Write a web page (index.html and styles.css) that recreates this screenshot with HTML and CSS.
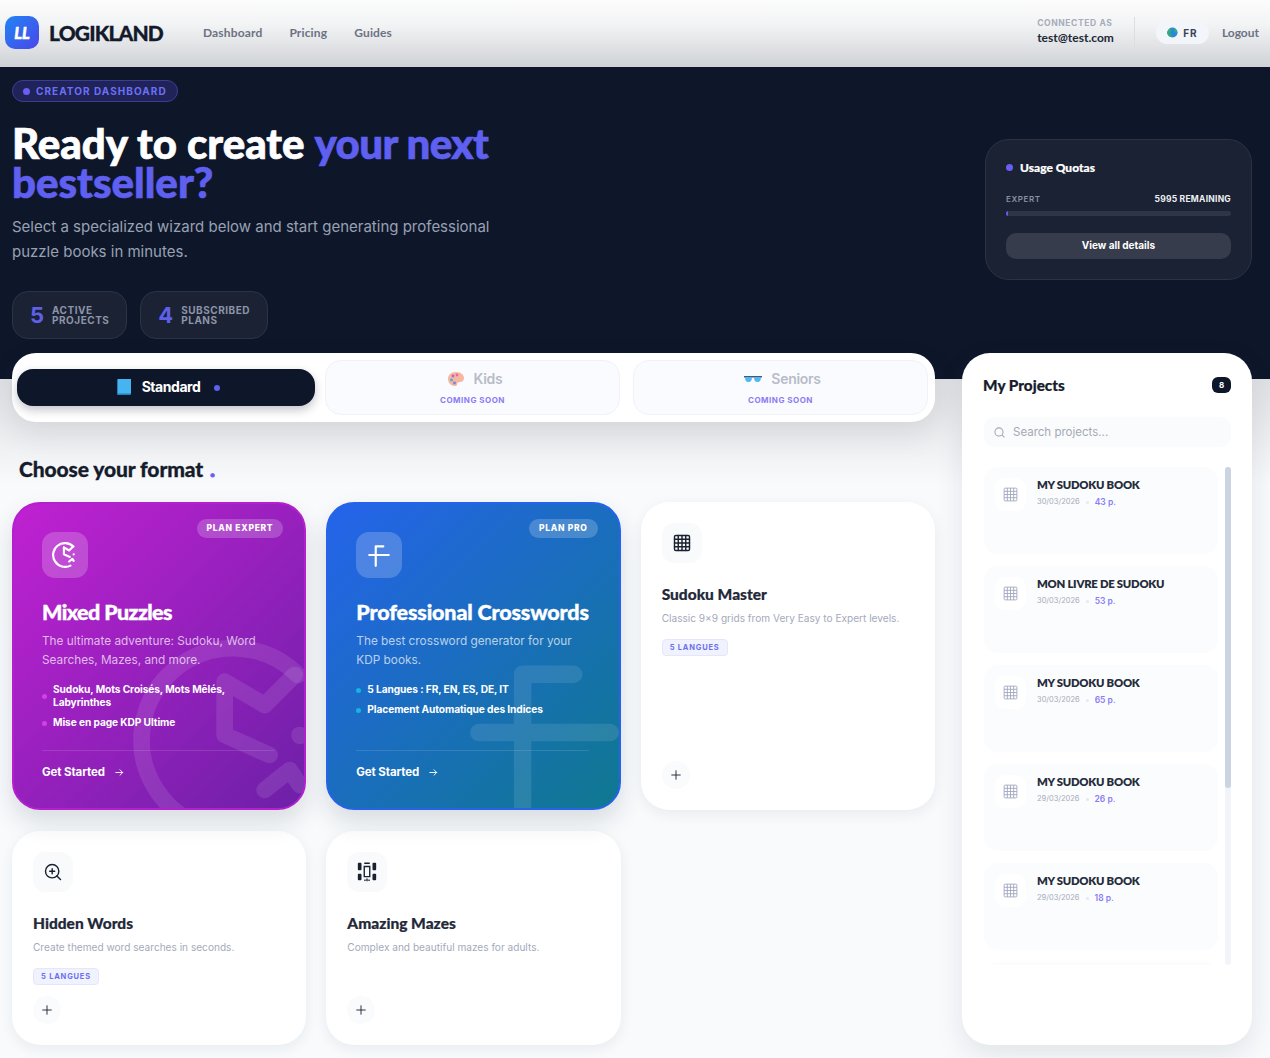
FILE: index.html
```html
<!DOCTYPE html>
<html lang="en">
<head>
    <meta charset="UTF-8">
    <meta name="viewport" content="width=device-width, initial-scale=1.0">
    <title>Logikland - Creator Dashboard</title>
    <link rel="stylesheet" href="styles.css">
</head>
<body>

<!-- Shared icons -->
<svg class="icon-defs" width="0" height="0">
    <symbol id="i-grid" viewBox="0 0 24 24"><rect x="3" y="3" width="18" height="18" rx="1.5"/><path d="M3 7.500h18M3 12h18M3 16.500h18M7.500 3v18M12 3v18M16.500 3v18"/></symbol>
    <symbol id="i-plus" viewBox="0 0 24 24"><path d="M12 4v16M4 12h16"/></symbol>
    <symbol id="i-arrow" viewBox="0 0 24 24"><path d="M4 12h15M13 6l6 6-6 6"/></symbol>
    <symbol id="i-clock" viewBox="0 0 24 24"><path d="M19.800 4.200A11 11 0 1 0 17 21.800"/><path d="M11 5L15.800 7.800 19.400 4.200M11 5v6.400l5.400 2.400M20 11.400v.1M15.800 18l3-2.400 1.200 1.800"/></symbol>
    <symbol id="i-cross" viewBox="0 0 24 24"><path d="M3 12h18M9 22V4h7"/></symbol>
</svg>

<header class="topbar">
    <div class="brand">
        <div class="brand-mark">LL</div>
        <span class="brand-name">LOGIKLAND</span>
    </div>
    <nav class="nav">
        <a>Dashboard</a>
        <a>Pricing</a>
        <a>Guides</a>
    </nav>
    <div class="account">
        <div class="account-info">
            <span class="account-label">CONNECTED AS</span>
            <span class="account-email">test@test.com</span>
        </div>
        <div class="account-sep"></div>
        <div class="lang">
            <svg class="globe" viewBox="0 0 12 12"><circle cx="6" cy="6" r="5.500" fill="#2f86d8"/><path d="M2 2.500c2-1 3-.5 3 1s-2 1.500-1.500 3 2 1.500 1.500 4.500c-2.500 0-4.500-2-5-4.500 0-1.500 1-3 2-4zM7 1c2 .5 4 2.500 4.500 5-1.500.5-3 0-3.500-1.500S8 2.500 7 1z" fill="#2fae7d"/></svg>
            <span>FR</span>
        </div>
        <a class="logout">Logout</a>
    </div>
</header>

<section class="hero">
    <div class="hero-main">
        <div class="hero-pill"><span class="dot"></span>CREATOR DASHBOARD</div>
        <h1>Ready to create <span class="accent tight">your next</span><br><span class="accent">bestseller?</span></h1>
        <p class="hero-text">Select a specialized wizard below and start generating professional puzzle books in minutes.</p>
        <div class="stats">
            <div class="stat"><span class="stat-num">5</span><span class="stat-label">ACTIVE<br>PROJECTS</span></div>
            <div class="stat"><span class="stat-num">4</span><span class="stat-label">SUBSCRIBED<br>PLANS</span></div>
        </div>
    </div>
    <aside class="quota">
        <div class="quota-title"><span class="dot"></span>Usage Quotas</div>
        <div class="quota-row"><span>EXPERT</span><strong>5995 REMAINING</strong></div>
        <div class="quota-bar"><div class="quota-fill" style="width: 1%"></div></div>
        <button class="quota-btn">View all details</button>
    </aside>
</section>

<div class="workspace">
    <main class="content">
        <div class="tabs">
            <div class="tab tab-active">
                <svg class="tab-icon" viewBox="0 0 14 16"><rect width="14" height="16" rx="1" fill="#1f7fc4"/><rect x="1" width="13" height="14.500" fill="#45b4ef"/></svg>
                <span>Standard</span>
                <span class="tab-dot"></span>
            </div>
            <div class="tab tab-soon">
                <div class="tab-line">
                    <svg class="tab-icon" viewBox="0 0 18 16"><path d="M9 1C4 1 1 4 1 8s3 7 7 7c2 0 2-1 2-2s1-2 3-2 4-1 4-4-3-6-8-6z" fill="#f5b7a1"/><circle cx="6" cy="5" r="1.400" fill="#c65ad6"/><circle cx="4.500" cy="9" r="1.400" fill="#3fb5c9"/><circle cx="7.500" cy="12" r="1.400" fill="#7f7fe0"/><circle cx="10" cy="4" r="1.400" fill="#e96a8c"/></svg>
                    <span>Kids</span>
                </div>
                <span class="soon">COMING SOON</span>
            </div>
            <div class="tab tab-soon tab-last">
                <div class="tab-line">
                    <svg class="tab-icon" viewBox="0 0 18 8"><path d="M0 1h18v1.500h-18z" fill="#4a5578"/><path d="M1 2h7c0 3-1 5-3.500 5S1 5 1 2zM10 2h7c0 3-1 5-3.500 5S10 5 10 2z" fill="#4fb8ee"/></svg>
                    <span>Seniors</span>
                </div>
                <span class="soon">COMING SOON</span>
            </div>
        </div>

        <h2 class="section-title">Choose your format <span class="section-dot">.</span></h2>

        <div class="formats">
            <article class="format format-mixed">
                <svg class="watermark watermark-clock"><use href="#i-clock"/></svg>
                <span class="plan">PLAN EXPERT</span>
                <div class="format-icon"><svg><use href="#i-clock"/></svg></div>
                <h3>Mixed Puzzles</h3>
                <p class="format-text">The ultimate adventure: Sudoku, Word Searches, Mazes, and more.</p>
                <ul class="perks">
                    <li>Sudoku, Mots Croisés, Mots Mêlés, Labyrinthes</li>
                    <li>Mise en page KDP Ultime</li>
                </ul>
                <div class="format-cta">Get Started <svg><use href="#i-arrow"/></svg></div>
            </article>

            <article class="format format-cross">
                <svg class="watermark watermark-cross"><use href="#i-cross"/></svg>
                <span class="plan">PLAN PRO</span>
                <div class="format-icon"><svg><use href="#i-cross"/></svg></div>
                <h3>Professional Crosswords</h3>
                <p class="format-text">The best crossword generator for your KDP books.</p>
                <ul class="perks">
                    <li>5 Langues : FR, EN, ES, DE, IT</li>
                    <li>Placement Automatique des Indices</li>
                </ul>
                <div class="format-cta">Get Started <svg><use href="#i-arrow"/></svg></div>
            </article>

            <article class="tool">
                <div class="tool-icon"><svg class="icon-line"><use href="#i-grid"/></svg></div>
                <h3>Sudoku Master</h3>
                <p>Classic 9×9 grids from Very Easy to Expert levels.</p>
                <span class="tag">5 LANGUES</span>
                <div class="tool-add"><svg><use href="#i-plus"/></svg></div>
            </article>

            <article class="tool">
                <div class="tool-icon">
                    <svg class="icon-line" viewBox="0 0 24 24"><circle cx="11" cy="11" r="8"/><path d="M21 21l-4.300-4.300M11 8v6M8 11h6"/></svg>
                </div>
                <h3>Hidden Words</h3>
                <p>Create themed word searches in seconds.</p>
                <span class="tag">5 LANGUES</span>
                <div class="tool-add"><svg><use href="#i-plus"/></svg></div>
            </article>

            <article class="tool">
                <div class="tool-icon">
                    <svg class="icon-maze" viewBox="0 0 24 24"><rect x="2" y="2" width="4" height="8" rx="1"/><rect x="18" y="2" width="4" height="8" rx="1"/><rect x="2" y="14" width="4" height="7" rx="1"/><rect x="18" y="14" width="4" height="7" rx="1"/><path class="maze-line" d="M9 6h6v11H9zM9 2.500h6M9 21h1.500M13.500 21H15M12 19v3"/></svg>
                </div>
                <h3>Amazing Mazes</h3>
                <p>Complex and beautiful mazes for adults.</p>
                <div class="tool-add"><svg><use href="#i-plus"/></svg></div>
            </article>
        </div>
    </main>

    <aside class="projects">
        <div class="projects-head">
            <h2>My Projects</h2>
            <span class="count">8</span>
        </div>
        <div class="search">
            <svg viewBox="0 0 24 24"><circle cx="11" cy="11" r="7.500"/><path d="M21 21l-4.500-4.500"/></svg>
            <span>Search projects...</span>
        </div>
        <div class="projects-body">
            <div class="project-list">
                <div class="project">
                    <div class="project-icon"><svg><use href="#i-grid"/></svg></div>
                    <div class="project-info"><h4>MY SUDOKU BOOK</h4><div class="meta"><span>30/03/2026</span><i></i><b>43 p.</b></div></div>
                </div>
                <div class="project">
                    <div class="project-icon"><svg><use href="#i-grid"/></svg></div>
                    <div class="project-info"><h4>MON LIVRE DE SUDOKU</h4><div class="meta"><span>30/03/2026</span><i></i><b>53 p.</b></div></div>
                </div>
                <div class="project">
                    <div class="project-icon"><svg><use href="#i-grid"/></svg></div>
                    <div class="project-info"><h4>MY SUDOKU BOOK</h4><div class="meta"><span>30/03/2026</span><i></i><b>65 p.</b></div></div>
                </div>
                <div class="project">
                    <div class="project-icon"><svg><use href="#i-grid"/></svg></div>
                    <div class="project-info"><h4>MY SUDOKU BOOK</h4><div class="meta"><span>29/03/2026</span><i></i><b>26 p.</b></div></div>
                </div>
                <div class="project">
                    <div class="project-icon"><svg><use href="#i-grid"/></svg></div>
                    <div class="project-info"><h4>MY SUDOKU BOOK</h4><div class="meta"><span>29/03/2026</span><i></i><b>18 p.</b></div></div>
                </div>
                <div class="project project-cut"></div>
            </div>
            <div class="scrollbar"><div class="scrollbar-thumb"></div></div>
        </div>
    </aside>
</div>

</body>
</html>
```

FILE: styles.css
```css
* {
    box-sizing: border-box;
}

body {
    margin: 0;
    font-family: 'Inter', sans-serif;
    color: #1e2433;
    /* soft grey band right under the dark hero */
    background: linear-gradient(#dfe0e3 0, #dfe0e3 379px, #f8fafc 485px);
}

h1, h2, h3, h4, p, ul {
    margin: 0;
    padding: 0;
}

.icon-defs {
    position: absolute;
}

.accent {
    color: #5f5ff0;
}

.dot {
    width: 7px;
    height: 7px;
    border-radius: 50%;
    background: #6a5df5;
    flex: none;
}

/* Top bar */
.topbar {
    height: 67px;
    display: flex;
    align-items: center;
    padding: 0 11px 2px 5px;
    background: linear-gradient(#fcfcfc 0, #f3f4f5 35%, #cfd2d6 100%);
}

.brand {
    display: flex;
    align-items: center;
    gap: 10px;
}

.brand-mark {
    width: 34px;
    height: 33px;
    border-radius: 10px;
    background: linear-gradient(135deg, #2185f4, #4b46e8);
    color: #fff;
    font-family: 'Lato', sans-serif;
    font-weight: 900;
    font-style: italic;
    font-size: 16px;
    line-height: 33px;
    text-align: center;
    -webkit-text-stroke: 0.5px #fff;
}

.brand-name {
    margin-bottom: 1px;
    font-family: 'Lato', sans-serif;
    font-weight: 900;
    font-size: 21px;
    letter-spacing: -0.85px;
    color: #131a2b;
    -webkit-text-stroke: 0.3px #131a2b;
}

.nav {
    display: flex;
    gap: 27px;
    margin: 0 0 1px 40px;
    font-family: 'Lato', sans-serif;
    font-size: 12px;
    font-weight: 700;
    letter-spacing: 0.15px;
    color: #6b7285;
}

.account {
    margin-left: auto;
    display: flex;
    align-items: center;
}

.account-info {
    display: flex;
    flex-direction: column;
    gap: 2px;
    margin-bottom: 3px;
}

.account-label {
    font-size: 8.500px;
    font-weight: 700;
    letter-spacing: 0.6px;
    color: #a6acbb;
}

.account-email {
    font-family: 'Lato', sans-serif;
    font-size: 12px;
    font-weight: 700;
    color: #222836;
}

.account-sep {
    width: 1px;
    height: 32px;
    margin: 0 21px 0 20px;
    background: #dcdee2;
}

.lang {
    width: 53px;
    height: 22px;
    display: flex;
    align-items: center;
    justify-content: center;
    gap: 5px;
    border-radius: 11px;
    background: #f2f5fa;
    font-size: 10px;
    font-weight: 700;
    letter-spacing: 1px;
    color: #3b4254;
}

.globe {
    width: 11px;
    height: 11px;
}

.logout {
    margin: 0 0 1px 13px;
    font-family: 'Lato', sans-serif;
    font-size: 12px;
    font-weight: 700;
    color: #6b7285;
}

/* Hero */
.hero {
    height: 312px;
    display: flex;
    align-items: center;
    justify-content: space-between;
    padding: 13px 18px 40px 12px;
    background: #0e172a;
}

.hero-main {
    width: 490px;
    align-self: flex-start;
}

.hero-pill {
    display: flex;
    width: fit-content;
    align-items: center;
    gap: 6px;
    height: 22px;
    padding: 0 10px;
    border: 1px solid #3a3d96;
    border-radius: 11px;
    background: #1f2358;
    font-size: 10px;
    font-weight: 700;
    letter-spacing: 1.05px;
    color: #6c70f5;
}

.hero h1 {
    margin-top: 22px;
    font-family: 'Lato', sans-serif;
    font-weight: 900;
    font-size: 42px;
    line-height: 39px;
    color: #fff;
    -webkit-text-stroke: 0.7px currentColor;
}

.hero h1 .tight {
    letter-spacing: -0.55px;
}

.hero-text {
    margin-top: 12px;
    font-size: 15px;
    line-height: 25px;
    color: #98a1b3;
}

.stats {
    display: flex;
    gap: 13px;
    margin-top: 27px;
}

.stat {
    height: 48px;
    display: flex;
    align-items: center;
    gap: 8px;
    padding: 0 17px;
    border: 1px solid #2b3346;
    border-radius: 16px;
    background: #1a2233;
}

.stat-num {
    font-size: 22px;
    font-weight: 700;
    color: #5f5fe8;
}

.stat-label {
    font-size: 10px;
    font-weight: 700;
    line-height: 10px;
    letter-spacing: 0.5px;
    color: #8d94a8;
}

/* Usage quota card */
.quota {
    width: 267px;
    height: 141px;
    padding: 19px 20px;
    border: 1px solid #2b3244;
    border-radius: 24px;
    background: #1b2233;
}

.quota-title {
    display: flex;
    align-items: center;
    gap: 7px;
    height: 16px;
    font-family: 'Lato', sans-serif;
    font-size: 12px;
    font-weight: 900;
    color: #fff;
    -webkit-text-stroke: 0.2px #fff;
}

.quota-row {
    display: flex;
    justify-content: space-between;
    margin-top: 19px;
    font-size: 8px;
    line-height: 10px;
    font-weight: 600;
    letter-spacing: 0.6px;
    color: #8a91a3;
}

.quota-row strong {
    color: #eef0f4;
    font-size: 8.500px;
    font-weight: 700;
    letter-spacing: 0.25px;
}

.quota-bar {
    height: 5px;
    margin-top: 7px;
    border-radius: 3px;
    background: #2e3547;
    overflow: hidden;
}

.quota-fill {
    height: 100%;
    background: #5f5ff0;
}

.quota-btn {
    display: block;
    width: 100%;
    height: 26px;
    margin-top: 17px;
    padding: 0 0 2px;
    border: none;
    border-radius: 10px;
    background: #363c4c;
    color: #fff;
    font-family: 'Inter', sans-serif;
    font-size: 10px;
    font-weight: 700;
}

/* Main grid area */
.workspace {
    display: flex;
    gap: 27px;
    margin-top: -26px;
    padding: 0 18px 13px 12px;
}

.content {
    width: 923px;
}

.tabs {
    height: 69px;
    display: grid;
    grid-template-columns: 298px 295px 295px;
    column-gap: 10px;
    align-items: center;
    padding: 0 5px;
    border-radius: 24px;
    background: #fff;
    box-shadow: 0 12px 30px rgba(30, 40, 60, 0.1);
}

.tab-active {
    height: 37px;
    display: flex;
    align-items: center;
    justify-content: center;
    gap: 11px;
    padding: 0 0 2px 5px;
    border-radius: 16px;
    background: #0e172a;
    color: #fff;
    font-size: 14px;
    font-weight: 700;
    letter-spacing: -0.45px;
    box-shadow: 0 4px 10px rgba(14, 23, 42, 0.25);
}

.tab-icon {
    width: 14px;
    height: 16px;
}

.tab-dot {
    width: 6px;
    height: 6px;
    margin: 2px 0 0 3px;
    border-radius: 50%;
    background: #5f5ff0;
}

.tab-soon {
    height: 55px;
    display: flex;
    flex-direction: column;
    align-items: center;
    justify-content: center;
    gap: 8px;
    border: 1px solid #f0f2f7;
    border-radius: 16px;
    background: #fafbfe;
}

.tab-last {
    margin: 0 -3px 0 3px;
}

.tab-line {
    display: flex;
    align-items: center;
    gap: 9px;
    padding-left: 4px;
    font-size: 14px;
    font-weight: 600;
    letter-spacing: -0.3px;
    color: #b7bcc8;
}

.tab-line .tab-icon {
    width: 18px;
}

.soon {
    font-size: 8px;
    font-weight: 700;
    letter-spacing: 0.5px;
    color: #8a7cf5;
}

.section-title {
    margin: 35px 0 21px 7px;
    font-family: 'Lato', sans-serif;
    font-size: 21px;
    line-height: 24px;
    font-weight: 900;
    letter-spacing: -0.1px;
    color: #161c2c;
    -webkit-text-stroke: 0.3px #161c2c;
}

.section-dot {
    color: #6a5df5;
    -webkit-text-stroke: 1px #6a5df5;
    margin-left: 2px;
}

.formats {
    display: grid;
    grid-template-columns: repeat(3, 1fr);
    grid-template-rows: 308px 214px;
    gap: 21px 20px;
}

/* Coloured plan cards */
.format {
    position: relative;
    overflow: hidden;
    padding: 28px 28px 0 28px;
    border-radius: 28px;
    color: #fff;
    box-shadow: 0 12px 24px rgba(30, 40, 60, 0.14);
}

.format-mixed {
    border: 2px solid #b41fd0;
    background: linear-gradient(135deg, #c021d2, #6d20a8);
}

.format-cross {
    border: 2px solid #2563eb;
    background: linear-gradient(135deg, #2563eb, #0f7890);
}

.watermark {
    position: absolute;
    fill: none;
    stroke: rgba(255, 255, 255, 0.1);
    stroke-width: 2;
    stroke-linecap: round;
    stroke-linejoin: round;
}

.watermark-clock {
    width: 200px;
    height: 200px;
    right: -29px;
    bottom: -32px;
}

.watermark-cross {
    width: 175px;
    height: 175px;
    right: -13px;
    bottom: -12px;
    stroke-width: 2.400;
}

.plan {
    position: absolute;
    top: 15px;
    right: 21px;
    height: 19px;
    padding: 0 10px;
    border-radius: 10px;
    background: rgba(255, 255, 255, 0.2);
    font-size: 8.500px;
    font-weight: 800;
    line-height: 19px;
    letter-spacing: 0.7px;
}

.format-icon {
    width: 46px;
    height: 46px;
    display: flex;
    align-items: center;
    justify-content: center;
    border-radius: 13px;
    background: rgba(255, 255, 255, 0.2);
}

.format-icon svg {
    width: 26px;
    height: 26px;
    fill: none;
    stroke: #fff;
    stroke-width: 2;
    stroke-linecap: round;
    stroke-linejoin: round;
}

.format h3 {
    margin-top: 20px;
    font-family: 'Lato', sans-serif;
    font-size: 21.500px;
    line-height: 28px;
    font-weight: 900;
    white-space: nowrap;
    -webkit-text-stroke: 0.4px #fff;
}

.format-mixed h3 {
    letter-spacing: -0.6px;
}

.format-cross h3 {
    letter-spacing: -0.15px;
}

.format-text {
    margin-top: 6px;
    font-size: 11.800px;
    line-height: 19px;
    color: rgba(255, 255, 255, 0.7);
}

.perks {
    list-style: none;
    margin-top: 13px;
    font-size: 10.200px;
    line-height: 13px;
    font-weight: 700;
}

.perks li {
    position: relative;
    padding-left: 11px;
    margin-bottom: 7px;
    letter-spacing: -0.1px;
}

.perks li::before {
    content: "";
    position: absolute;
    left: 0;
    top: 50%;
    width: 5px;
    height: 5px;
    margin-top: -2px;
    border-radius: 50%;
    background: #d63fe6;
}

.format-cross .perks li::before {
    background: #12b5e6;
}

.format-cta {
    position: absolute;
    left: 28px;
    right: 30px;
    top: 246px;
    padding-top: 13px;
    border-top: 1px solid rgba(255, 255, 255, 0.12);
    display: flex;
    align-items: center;
    gap: 9px;
    font-size: 11.500px;
    line-height: 16px;
    font-weight: 700;
    letter-spacing: -0.1px;
}

.format-cta svg {
    width: 11px;
    height: 11px;
    fill: none;
    stroke: #fff;
    stroke-width: 2;
    stroke-linecap: round;
    stroke-linejoin: round;
}

/* White tool cards */
.tool {
    display: flex;
    flex-direction: column;
    align-items: flex-start;
    padding: 21px 21px 21px;
    border-radius: 28px;
    background: #fff;
    box-shadow: 0 4px 14px rgba(30, 40, 60, 0.07);
}

.tool-icon {
    width: 40px;
    height: 40px;
    display: flex;
    align-items: center;
    justify-content: center;
    border-radius: 12px;
    background: #f8fafc;
}

.icon-line {
    width: 20px;
    height: 20px;
    fill: none;
    stroke: #1a2030;
    stroke-width: 1.700;
    stroke-linecap: round;
    stroke-linejoin: round;
}

.icon-maze {
    width: 22px;
    height: 22px;
    fill: #1a2030;
}

.maze-line {
    fill: none;
    stroke: #1a2030;
    stroke-width: 1.500;
}

.tool h3 {
    margin-top: 21px;
    font-family: 'Lato', sans-serif;
    font-size: 15.500px;
    line-height: 20px;
    font-weight: 900;
    color: #232938;
    -webkit-text-stroke: 0.2px #232938;
}

.tool p {
    margin-top: 7px;
    font-size: 10.100px;
    line-height: 14px;
    color: #a4aabb;
}

.tag {
    height: 17px;
    margin-top: 14px;
    padding: 0 7px;
    border: 1px solid #e4e7fb;
    border-radius: 4px;
    background: #f0f2fe;
    font-size: 7.500px;
    font-weight: 700;
    line-height: 15px;
    letter-spacing: 0.8px;
    color: #6c6ff0;
}

.tool-add {
    width: 28px;
    height: 28px;
    margin-top: auto;
    display: flex;
    align-items: center;
    justify-content: center;
    border-radius: 50%;
    background: #fafbfd;
}

.tool-add svg {
    width: 14px;
    height: 14px;
    fill: none;
    stroke: #1e2433;
    stroke-width: 1.600;
}

/* Projects sidebar */
.projects {
    width: 290px;
    height: 692px;
    padding: 21px 21px 0;
    border-radius: 28px;
    background: #fff;
    box-shadow: 0 10px 28px rgba(30, 40, 60, 0.1);
}

.projects-head {
    display: flex;
    align-items: center;
    justify-content: space-between;
    height: 22px;
}

.projects-head h2 {
    font-family: 'Lato', sans-serif;
    font-size: 15.300px;
    font-weight: 900;
    color: #161c2c;
    -webkit-text-stroke: 0.2px #161c2c;
}

.count {
    width: 19px;
    height: 16px;
    border-radius: 6px;
    background: #0e172a;
    color: #fff;
    font-size: 8px;
    font-weight: 700;
    line-height: 16px;
    text-align: center;
}

.search {
    height: 30px;
    margin: 21px 0 20px 1px;
    display: flex;
    align-items: center;
    gap: 7px;
    padding-left: 9px;
    border-radius: 10px;
    background: #fafbfd;
    font-size: 11.500px;
    color: #a5a9b4;
}

.search svg {
    width: 13px;
    height: 13px;
    fill: none;
    stroke: #a5a9b4;
    stroke-width: 2;
}

.projects-body {
    height: 498px;
    display: flex;
    justify-content: space-between;
    margin-left: 1px;
}

.project-list {
    width: 234px;
    height: 498px;
    overflow: hidden;
    display: flex;
    flex-direction: column;
    gap: 12px;
}

.project {
    height: 87px;
    flex: none;
    display: flex;
    gap: 11px;
    padding: 11px 11px;
    border-radius: 14px;
    background: #fafcfe;
}

.project-icon {
    width: 31px;
    height: 33px;
    flex: none;
    display: flex;
    align-items: center;
    justify-content: center;
    border-radius: 10px;
    background: #fff;
}

.project-icon svg {
    width: 17px;
    height: 17px;
    fill: none;
    stroke: #a3a8c0;
    stroke-width: 1.300;
}

.project-info {
    margin-top: -1px;
}

.project h4 {
    font-family: 'Lato', sans-serif;
    font-size: 11.300px;
    line-height: 16px;
    font-weight: 800;
    letter-spacing: -0.25px;
    color: #262c3a;
}

.meta {
    display: flex;
    align-items: center;
    gap: 5px;
    margin-top: 2px;
    font-size: 7.500px;
    line-height: 14px;
    color: #a6abb9;
}

.meta i {
    width: 3px;
    height: 3px;
    margin: 0 1px;
    border-radius: 50%;
    background: #e6e8ee;
}

.meta b {
    font-size: 8.500px;
    font-weight: 600;
    color: #8a7cf5;
}

.scrollbar {
    width: 6px;
    height: 498px;
    border-radius: 3px;
    background: #f1f5f9;
}

.scrollbar-thumb {
    height: 321px;
    border-radius: 3px;
    background: #cbd5e1;
}
```
